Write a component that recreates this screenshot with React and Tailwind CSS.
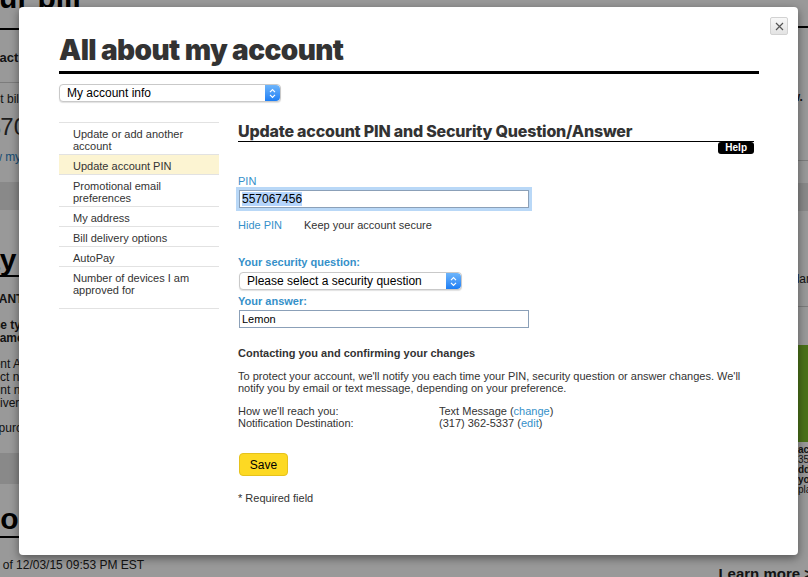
import React from 'react';

const blue = 'text-[#3590c9]';

function Stepper() {
  return (
    <span className="flex w-[15px] shrink-0 items-center justify-center rounded-r-[4px] bg-linear-to-b from-[#6db5fb] to-[#1b7ef4]">
      <svg width="7" height="11" viewBox="0 0 7 11">
        <path d="M1 4.2 L3.5 1.7 L6 4.2 M1 6.8 L3.5 9.3 L6 6.8" stroke="white" strokeWidth="1.2" fill="none" />
      </svg>
    </span>
  );
}

function MacSelect({ label, className }) {
  return (
    <div className={`flex h-[18px] overflow-hidden rounded-[4px] border border-[#c9c9c9] bg-white shadow-[0_1px_1px_rgba(0,0,0,0.12)] ${className}`}>
      <span className="flex-1 pl-[7px] text-[12px] leading-[16px] text-black">{label}</span>
      <Stepper />
    </div>
  );
}

// dimmed page behind the dialog
function Background() {
  return (
    <div className="flex h-[577px] w-[808px] overflow-hidden bg-white text-[12px] text-[#222]">
      <div className="w-[80px] shrink-0 overflow-hidden">
        <div className="-mt-[17px] border-b-2 border-black pb-[15px]">
          <h1 className="-ml-[37px] whitespace-nowrap text-[30px] font-bold leading-[30px] text-black">Your bill</h1>
        </div>
        <p className="-ml-[30px] mt-[20px] whitespace-nowrap text-[13px] font-bold leading-[16px]">Contact us</p>
        <div className="mt-[16px] h-px bg-[#cfcfcf]" />
        <p className="-ml-[19px] mt-[9px] whitespace-nowrap leading-[14px]">Last bill</p>
        <p className="-ml-[13px] mt-[7px] whitespace-nowrap text-[24px] leading-[28px] text-[#333]">$70.00</p>
        <p className="-ml-[24px] mt-[9px] whitespace-nowrap leading-[14px] text-[#2a7fbf]">View my bill</p>
        <div className="mt-[18px] h-[28px] bg-[#e4e4e4]" />
        <div className="mt-[35px] border-b-2 border-black">
          <div className="w-[60px] overflow-hidden">
            <h1 className="-ml-[37px] whitespace-nowrap text-[30px] font-bold leading-[30px] text-black">Pay a bill</h1>
          </div>
        </div>
        <p className="-ml-[47px] mt-[15px] whitespace-nowrap font-bold leading-[14px]">IMPORTANT</p>
        <div className="mt-[13px] font-bold leading-[13px]">
          <p className="-ml-[37px] whitespace-nowrap">Choose type</p>
          <p className="-ml-[9px] whitespace-nowrap">Name</p>
        </div>
        <div className="mt-[13px] leading-[13px]">
          <p className="-ml-[37px] whitespace-nowrap">Payment Account</p>
          <p className="-ml-[32px] whitespace-nowrap">Product number</p>
          <p className="-ml-[33px] whitespace-nowrap">Account number</p>
          <p className="-ml-[18px] whitespace-nowrap">Delivery date</p>
        </div>
        <p className="-ml-[29px] mt-[12px] whitespace-nowrap leading-[13px]">Your purchase</p>
        <div className="mt-[18px] h-[31px] bg-[#e4e4e4]" />
        <div className="mt-[20px] border-b-2 border-black pb-[2px]">
          <h1 className="-ml-[23px] whitespace-nowrap text-[30px] font-bold leading-[30px] text-black">Good news</h1>
        </div>
      </div>
      <div className="flex-1" />
      <div className="w-[100px] shrink-0 overflow-hidden">
        <div className="mt-[13px] border-b-2 border-black pb-[13px]" />
        <p className="mt-[62px] whitespace-nowrap pl-[68px] font-bold leading-[14px]">now.</p>
        <div className="mt-[56px] h-px bg-[#cfcfcf]" />
        <div className="mt-[22px] h-[28px] bg-[#e4e4e4]" />
        <p className="mt-[61px] whitespace-nowrap pl-[56px] leading-[14px]">calendar</p>
        <div className="mt-[20px] h-px bg-[#cfcfcf]" />
        <div className="mt-[38px] h-[97px] bg-[#7cbd2a]" />
        <div className="mt-[3px] pl-[90px] text-[10px] leading-[10px]">
          <p className="whitespace-nowrap font-bold">ack</p>
          <p className="whitespace-nowrap">355</p>
          <p className="whitespace-nowrap font-bold">dd</p>
          <p className="whitespace-nowrap font-bold">you</p>
          <p className="whitespace-nowrap">plan</p>
        </div>
      </div>
      <div className="pointer-events-none absolute bottom-[5px] left-0 right-0 flex items-end justify-between">
        <span className="-ml-[60px] whitespace-nowrap text-[12px] leading-[14px] text-[#222]">Balance as of 12/03/15 09:53 PM EST</span>
        <span className="-mb-[10px] mr-[-5px] whitespace-nowrap text-[15px] font-bold leading-[16px] text-[#222]">Learn more &gt;</span>
      </div>
    </div>
  );
}

const menu = [
  'Update or add another account',
  'Update account PIN',
  'Promotional email preferences',
  'My address',
  'Bill delivery options',
  'AutoPay',
  'Number of devices I am approved for',
];

export default function App() {
  return (
    <div className="relative h-[577px] w-[808px] overflow-hidden font-['Liberation_Sans',Arial,Helvetica,sans-serif]">
      <Background />
      <div className="absolute inset-0 bg-black/40 pl-[19px] pt-[7px]">
        <div className="relative h-[548px] w-[779px] rounded-[4px] bg-white pl-[40px] pr-[44px] pt-[26px] shadow-[0_3px_10px_rgba(0,0,0,0.45)]">
          <button className="absolute right-[10px] top-[10px] flex h-[18px] w-[18px] items-center justify-center rounded-[2px] border border-[#d2d2d2] bg-linear-to-b from-[#f8f8f8] to-[#e3e3e3]">
            <svg width="9" height="9" viewBox="0 0 9 9">
              <path d="M1 1L8 8M8 1L1 8" stroke="#555" strokeWidth="1.2" />
            </svg>
          </button>

          <div className="-mr-[5px] border-b-[3px] border-black pb-[4px]">
            <h2 className="font-['Inter',sans-serif] text-[28px] font-black leading-[34px] tracking-[-0.6px] text-[#333]">
              All about my account
            </h2>
          </div>

          <MacSelect label="My account info" className="mt-[10px] w-[222px]" />

          <div className="mt-[20px] flex gap-[19px]">
            {/* Side menu */}
            <ul className="w-[160px] shrink-0 border-t border-[#e2e2e2] text-[11px] leading-[12px] text-[#333]">
              {menu.map((item, i) => (
                <li
                  key={item}
                  className={`border-b border-[#e2e2e2] pl-[14px] pr-[8px] pt-[5px] ${i === 6 ? 'pb-[12px]' : 'pb-[2px]'} ${i === 1 ? 'bg-[#fcf4d2]' : ''}`}
                >
                  {item}
                </li>
              ))}
            </ul>

            {/* Form */}
            <div className="flex-1 text-[11px] text-[#333]">
              <div className="border-b border-black pb-[1px]">
                <h3 className="font-['Inter',sans-serif] text-[16px] font-extrabold leading-[18px] tracking-[-0.2px] text-[#333]">
                  Update account PIN and Security Question/Answer
                </h3>
              </div>
              <div className="flex justify-end">
                <span className="h-[12px] rounded-[3px] bg-black px-[7px] text-[10px] font-bold leading-[12px] text-white">Help</span>
              </div>

              <p className={`mt-[21px] leading-[13px] ${blue}`}>PIN</p>
              <div className="ml-[1px] mt-[2px] h-[18px] w-[290px] border border-[#8ba0b8] bg-white shadow-[0_0_0_3px_#b9d8f7] text-[12px] leading-[16px] text-black">
                <span className="ml-[2px] bg-[#b5d5fc]">557067456</span>
              </div>

              <div className="mt-[11px] flex leading-[13px]">
                <span className={`w-[66px] ${blue}`}>Hide PIN</span>
                <span>Keep your account secure</span>
              </div>

              <p className={`mt-[24px] font-bold leading-[13px] ${blue}`}>Your security question:</p>
              <MacSelect label="Please select a security question" className="ml-[1px] mt-[3px] w-[223px]" />

              <p className={`mt-[5px] font-bold leading-[13px] ${blue}`}>Your answer:</p>
              <div className="ml-[1px] mt-[2px] h-[18px] w-[290px] border border-[#8ba0b8] bg-white pl-[2px] text-[11px] leading-[16px] text-black">
                Lemon
              </div>

              <p className="mt-[19px] font-bold leading-[13px]">Contacting you and confirming your changes</p>
              <p className="mt-[10px] leading-[12px]">
                To protect your account, we'll notify you each time your PIN, security question or answer changes. We'll
                <br />
                notify you by email or text message, depending on your preference.
              </p>

              <div className="mt-[11px] grid grid-cols-[201px_1fr] leading-[12px]">
                <span>How we'll reach you:</span>
                <span>
                  Text Message (<span className={blue}>change</span>)
                </span>
                <span>Notification Destination:</span>
                <span>
                  (317) 362-5337 (<span className={blue}>edit</span>)
                </span>
              </div>

              <button className="ml-[1px] mt-[24px] h-[23px] w-[49px] rounded-[4px] border border-[#e6c21c] bg-[#fdd923] text-[12px] text-black">
                Save
              </button>

              <p className="mt-[16px] leading-[13px]">* Required field</p>
            </div>
          </div>
        </div>
      </div>
    </div>
  );
}
